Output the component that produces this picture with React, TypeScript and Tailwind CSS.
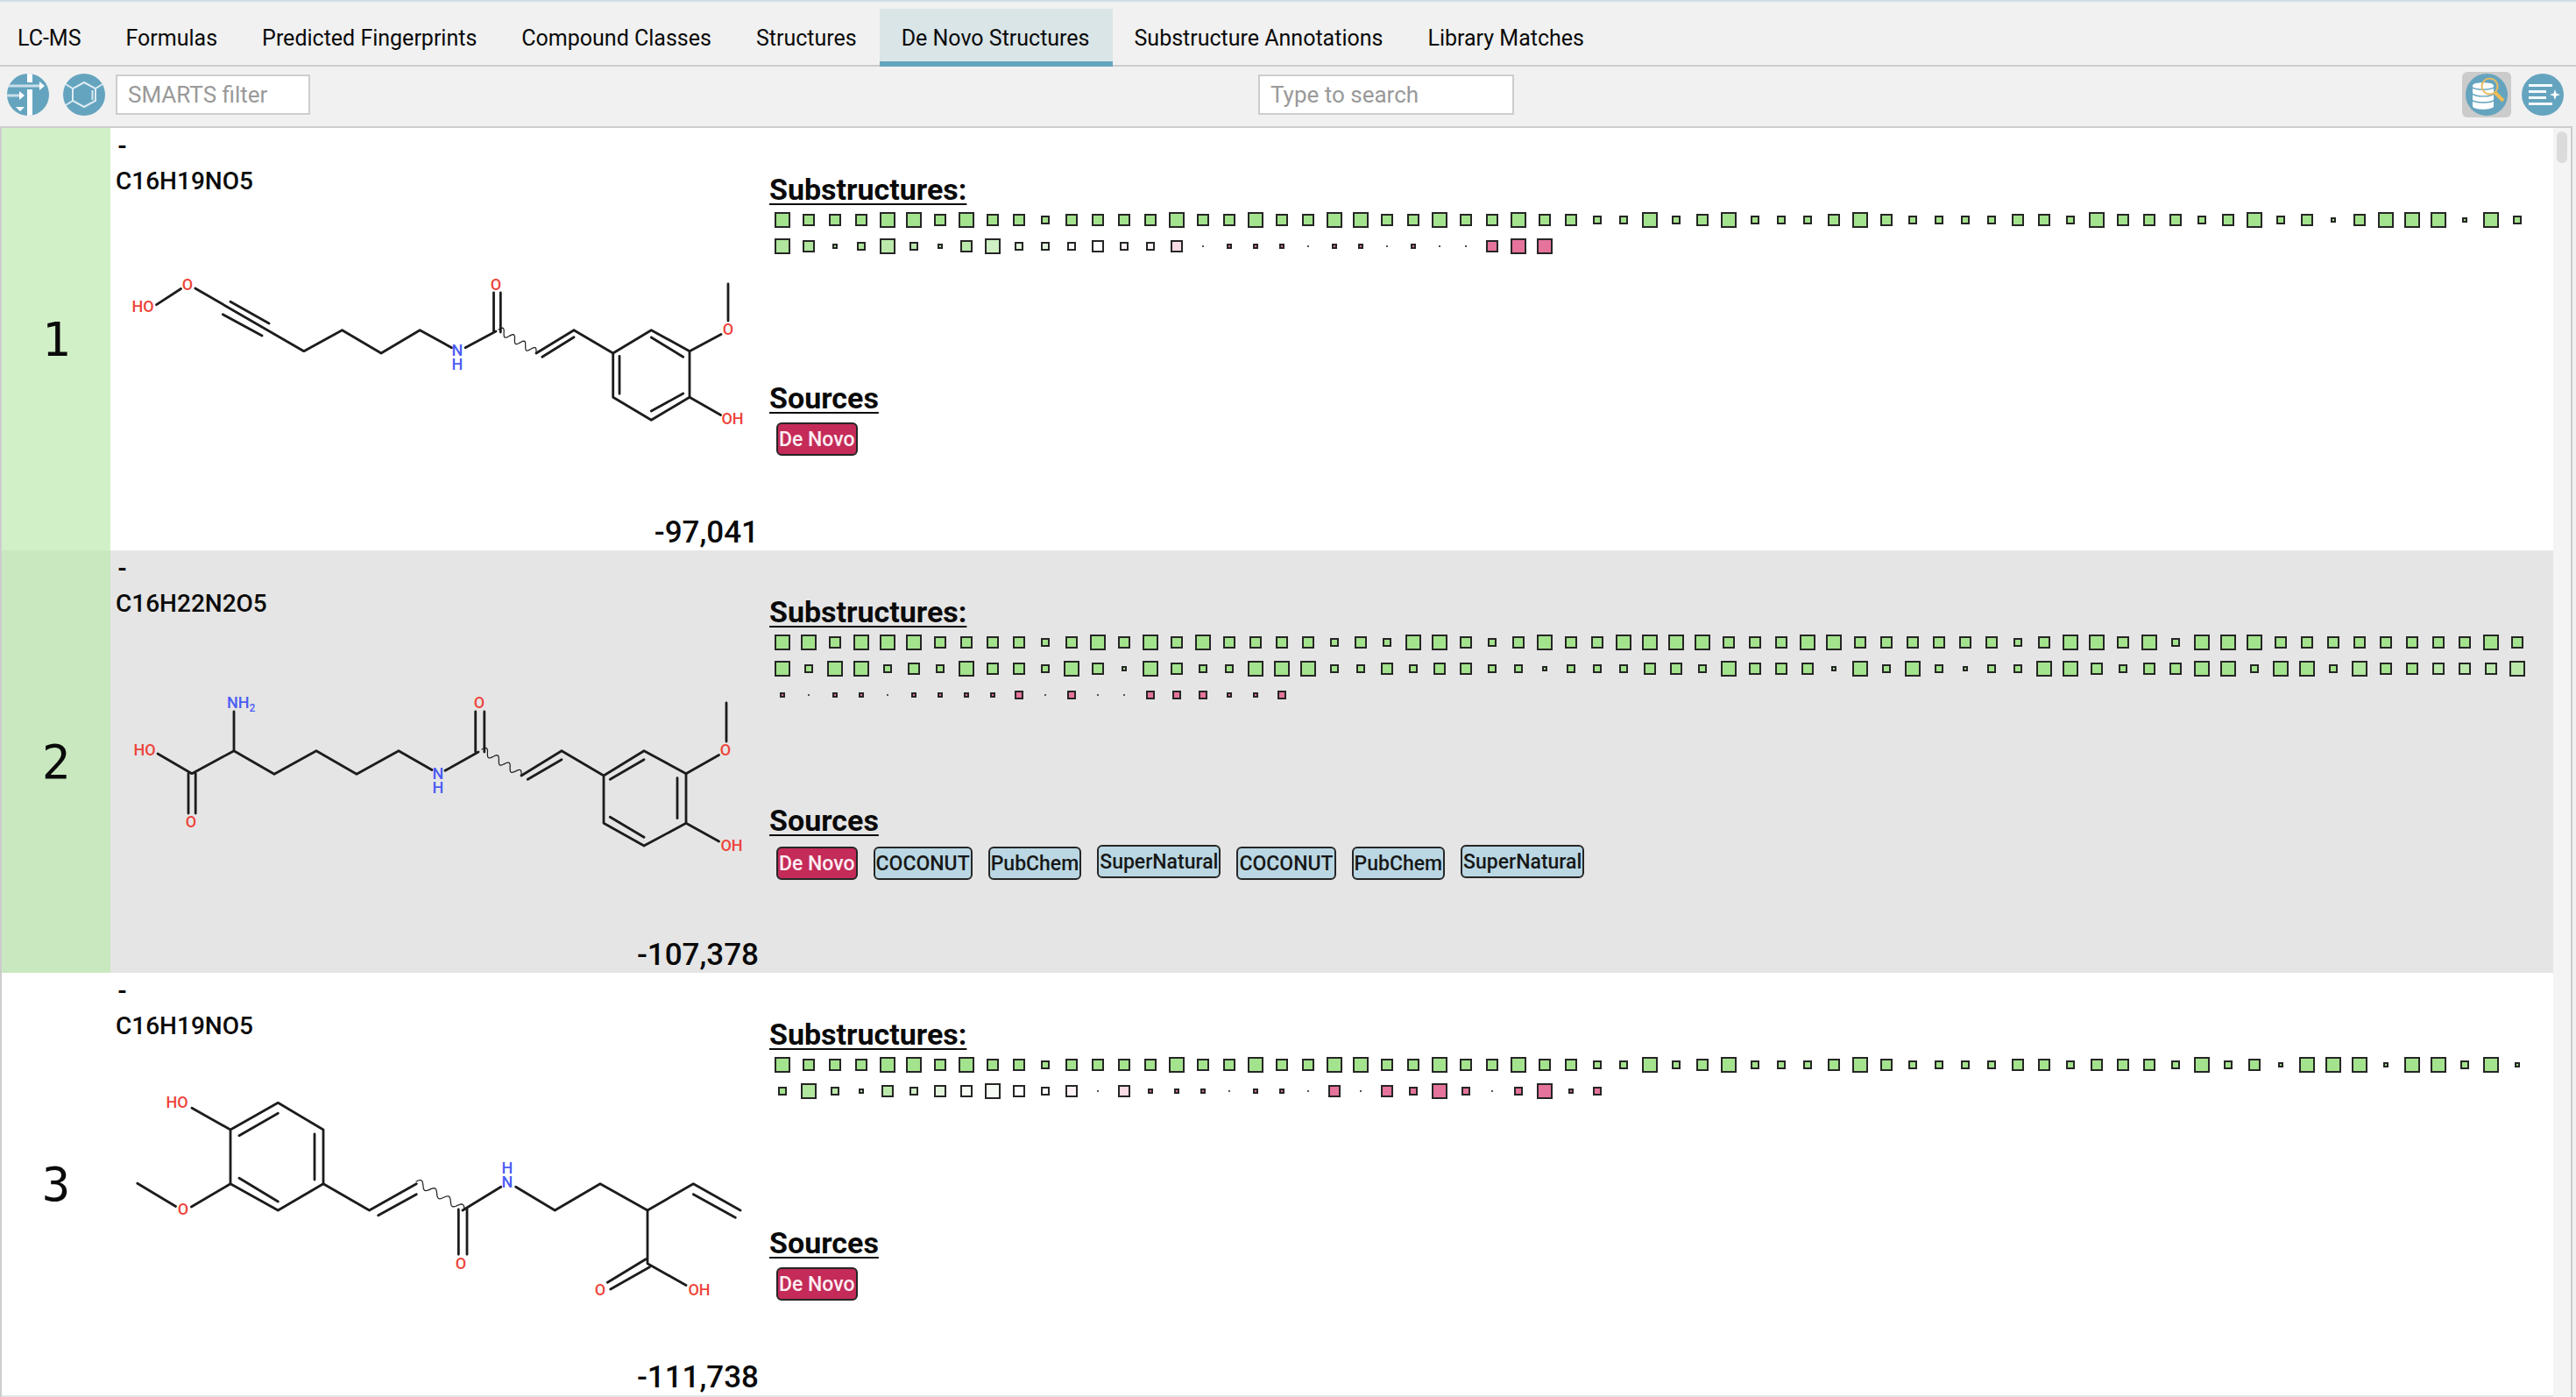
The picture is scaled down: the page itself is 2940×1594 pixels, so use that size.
import { useState } from "react";
import type { ReactNode } from "react";

const TABS = [
  "LC-MS",
  "Formulas",
  "Predicted Fingerprints",
  "Compound Classes",
  "Structures",
  "De Novo Structures",
  "Substructure Annotations",
  "Library Matches",
];

/* Marker sizes, from a two pixel dot up to the largest square. */
const SIZE: Record<string, string> = {
  "0": "size-0.5 bg-neutral-600",
  "1": "size-1.5 border-2 border-neutral-800",
  "2": "size-2.5 border-2 border-neutral-800",
  "3": "size-3.5 border-2 border-neutral-800",
  "4": "size-[18px] border-2 border-neutral-800",
};

/* Marker fills, from strongly positive (A) to strongly negative (J). */
const FILL: Record<string, string> = {
  A: "bg-[#a4e38d]",
  B: "bg-[#b0e69d]",
  C: "bg-[#bbe9ab]",
  D: "bg-[#cff0c4]",
  E: "bg-[#e2f5db]",
  F: "bg-[#f6fcf4]",
  G: "bg-white",
  H: "bg-[#fff1f5]",
  I: "bg-[#f8dbe4]",
  J: "bg-[#e6739c]",
};

type Candidate = {
  rank: number;
  formula: string;
  score: string;
  explained: boolean;
  sizes: string;
  fills: string;
  sources: string[];
  molecule: ReactNode;
};

function wave(x1: number, y1: number, x2: number, y2: number) {
  const steps = 56;
  const dx = x2 - x1;
  const dy = y2 - y1;
  const len = Math.hypot(dx, dy);
  let d = "";
  for (let i = 0; i <= steps; i++) {
    const t = i / steps;
    const a = -4 * Math.sin(t * Math.PI * 7);
    const x = x1 + dx * t - (dy / len) * a;
    const y = y1 + dy * t + (dx / len) * a;
    d += `${i ? "L" : "M"}${x.toFixed(1)} ${y.toFixed(1)}`;
  }
  return d;
}

/* An atom label centred on x, y; a second label may be stacked below it. */
function Atom({
  x,
  y,
  blue,
  below,
  children,
}: {
  x: number;
  y: number;
  blue?: boolean;
  below?: string;
  children: ReactNode;
}) {
  return (
    <text
      x={x}
      y={y + 6}
      textAnchor="middle"
      stroke="none"
      fill={blue ? "#4a5cf5" : "#ee4339"}
      className="text-[18px] font-medium"
    >
      {children}
      {below && (
        <tspan x={x} dy="16">
          {below}
        </tspan>
      )}
    </text>
  );
}

function Drawing({ label, top, children }: { label: string; top: number; children: ReactNode }) {
  return (
    <svg
      role="img"
      aria-label={label}
      width="734"
      height="360"
      viewBox="0 0 734 360"
      fill="none"
      stroke="#1c1c1c"
      strokeWidth="2.8"
      strokeLinecap="round"
      strokeLinejoin="round"
      className="shrink-0"
    >
      <g transform={`translate(0 ${top})`}>{children}</g>
    </svg>
  );
}

const mol1 = (
  <Drawing label="Structure of candidate 1" top={54}>
    <path d="M46.6 67.7L74.5 49.500M90.8 49L214.8 120.7L258.5 96.7L303 123L347.2 96.7L383.5 116.7M131 64.3L175 89M122.3 78.7L167 103" />
    <path d="M399 116.7L434 98M431.5 54V98M439.3 54V99" />
    <path d={wave(437, 96, 480, 122)} strokeWidth="1.2" />
    <path d="M480 123L523 96.7M486.8 127.3L523 104.7M523 96.7L567.7 123L611.3 96.7L655 120.7V173.3L611.3 199.3L567.7 173.3V123" />
    <path d="M575 126.3V169.3M611.3 105L647.7 127.3M647.7 169L611.3 189M655 120.7L691 101.500M699 86V44M655 173.3L690.500 193.500" />
    <Atom x={31} y={70}>HO</Atom>
    <Atom x={82} y={45}>O</Atom>
    <Atom x={390} y={120} below="H" blue>N</Atom>
    <Atom x={434} y={45}>O</Atom>
    <Atom x={699} y={96}>O</Atom>
    <Atom x={704} y={198}>OH</Atom>
  </Drawing>
);

const mol2 = (
  <Drawing label="Structure of candidate 2" top={62}>
    <path d="M48 90L87 112.7L135 86.7V42M135 86.7L181 113.3L229 86.7L275 113.3L323 86.7L361 108.500M83 112.7V158M91.2 112.7V158" />
    <path d="M376 109.3L414 88M410.7 42V88M420.8 42V88" />
    <path d={wave(418, 85, 463, 114)} strokeWidth="1.2" />
    <path d="M463 115L509 86.7M470.3 119.3L509 96.7M509 86.7L557 115L603 86.7L651 112.7V169.3L603 195L557 169.3V115" />
    <path d="M564.3 119.3L603 96.7M641 117.7V163.7M564.3 162.3L603 185.3M651 112.7L688.500 91.500M697 32V76M651 169.3L688.500 190" />
    <text x="127" y="38" stroke="none" fill="#4a5cf5" className="text-[18px] font-medium">
      NH<tspan dy="4" className="text-[12px]">2</tspan>
    </text>
    <Atom x={33} y={86}>HO</Atom>
    <Atom x={86} y={168}>O</Atom>
    <Atom x={368} y={113} below="H" blue>N</Atom>
    <Atom x={415} y={32}>O</Atom>
    <Atom x={696} y={86}>O</Atom>
    <Atom x={703} y={195}>OH</Atom>
  </Drawing>
);

const mol3 = (
  <Drawing label="Structure of candidate 3" top={30}>
    <path d="M87 44.3L131 69L185.3 38.3L237 69V130.7L185.3 161L131 130.7V69M141 75.7L185.3 50.3M227 74V126M141 124.3L185.3 151" />
    <path d="M131 130.7L86.4 157M24.8 130.3L68.500 156.500M237 130.7L289.5 161L343.3 130.7M299.7 166.7L343.3 142.7" />
    <path d={wave(343, 128, 398, 160)} strokeWidth="1.2" />
    <path d="M391.3 160V211.3M401 159V211.3M396 161L439.7 134.3M456.7 134.3L501.3 161L553 130.7L607 161L659.3 130.7L713 161M659.3 142.7L707.3 169.3" />
    <path d="M607 161V221.7L651 246.500M605 216.7L561.4 243.3M609.4 225.7L564.8 251" />
    <Atom x={70} y={38}>HO</Atom>
    <Atom x={77} y={160}>O</Atom>
    <Atom x={394} y={222}>O</Atom>
    <Atom x={447} y={113} below="N" blue>H</Atom>
    <Atom x={553} y={252}>O</Atom>
    <Atom x={666} y={252}>OH</Atom>
  </Drawing>
);

const CANDIDATES: Candidate[] = [
  {
    rank: 1,
    formula: "C16H19NO5",
    score: "-97,041",
    explained: true,
    sizes:
      "433344343323333433433443343343322" +
      "4234222343222233243332342313444142" +
      "431242134222322301110110100344",
    fills: "A".repeat(67) + "BBBBCCCCDEEFGHHIJJJJJJJJJJJJJJ",
    sources: ["De Novo"],
    molecule: mol1,
  },
  {
    rank: 2,
    formula: "C16H22N2O5",
    score: "-107,378",
    explained: true,
    sizes:
      "443444333323434343333232443234334" +
      "4443334433333323443424443333333343" +
      "424423243324314322444223233221222" +
      "3324333142421224432334424424333334" +
      "10110111120200222112",
    fills: "A".repeat(67) + "A".repeat(60) + "BAACCCC" + "J".repeat(20),
    sources: ["De Novo", "COCONUT", "PubChem", "SuperNatural", "COCONUT", "PubChem", "SuperNatural"],
    molecule: mol2,
  },
  {
    rank: 3,
    formula: "C16H19NO5",
    score: "-111,738",
    explained: false,
    sizes:
      "433344343323333433433443343343322" +
      "4234222343222233233324231444144241" +
      "24213233432303111011030324202412",
    fills: "A".repeat(67) + "ABCCCDEFFGGHJIJJJJJJJJJJJJJJJJJJ",
    sources: ["De Novo"],
    molecule: mol3,
  },
];

function FilterIcon() {
  return (
    <svg viewBox="0 0 48 48" className="size-12" aria-hidden="true">
      <clipPath id="filter-disc">
        <circle cx="24" cy="24" r="24" />
      </clipPath>
      <g clipPath="url(#filter-disc)">
        <rect width="48" height="48" fill="#65a4bf" />
        <path d="M23 0h6v10h-6zM23 18h6v30h-6z" fill="#fff" />
        <path d="M0 14h38M0 25h15" stroke="#c9dfe9" strokeWidth="3" />
        <path d="M37 9l6 5l-6 5zM14 20l6 5l-6 5zM10 38h10l-5 5z" fill="#fff" />
      </g>
    </svg>
  );
}

function RingIcon() {
  return (
    <svg viewBox="0 0 48 48" className="size-12" aria-hidden="true">
      <circle cx="24" cy="24" r="24" fill="#65a4bf" />
      <path
        d="M24 10L37 17V31L24 38L11 31V17ZM37 17L45 12M11 17L3 12M11 31L3 36M33.500 19V30"
        fill="none"
        stroke="#dcecf3"
        strokeWidth="2"
      />
    </svg>
  );
}

function DatabaseIcon() {
  return (
    <svg viewBox="0 0 48 48" className="size-12" aria-hidden="true">
      <circle cx="24" cy="24" r="24" fill="#65a4bf" />
      <path d="M8 13.500C8 9 32 9 32 13.500V37C32 42 8 42 8 37Z" fill="#fff" />
      <path
        d="M7 15.500C11 19 29 19 33 15.500M7 22.500C11 27 29 27 33 22.500M7 30C11 34 29 34 33 30"
        fill="none"
        stroke="#65a4bf"
        strokeWidth="1.400"
      />
      <circle cx="27.500" cy="14.500" r="9" fill="none" stroke="#e9bb62" strokeWidth="2" />
      <path d="M33.500 21.500L43 31" stroke="#f0bb55" strokeWidth="4" />
    </svg>
  );
}

function LinesIcon() {
  return (
    <svg viewBox="0 0 48 48" className="size-12" aria-hidden="true">
      <circle cx="24" cy="24" r="24" fill="#65a4bf" />
      <path d="M8 13.500H35M8 20.500H28M8 27.500H28M8 34.500H35" stroke="#f4f9fb" strokeWidth="3" />
      <path d="M38 18L39.500 22.500L44 24L39.500 25.500L38 30L36.500 25.500L32 24L36.500 22.500Z" fill="#fff" />
    </svg>
  );
}

function Source({ name }: { name: string }) {
  const tone = name === "De Novo" ? "bg-[#c42b58] text-[#fdeef3]" : "bg-[#bad7e3] text-neutral-900";
  const raised = name === "SuperNatural" ? "mb-0.5" : "";
  return (
    <li
      className={`flex h-[38px] items-center rounded-md border-2 border-neutral-800 px-px pt-0.5 text-[23px] leading-6 font-medium ${tone} ${raised}`}
    >
      {name}
    </li>
  );
}

function Heading({ children }: { children: ReactNode }) {
  return (
    <h2 className="text-[34px] leading-10 font-bold underline decoration-2 underline-offset-4 [text-decoration-skip-ink:none]">
      {children}
    </h2>
  );
}

function CandidateRow({ item }: { item: Candidate }) {
  const shaded = item.rank % 2 === 0;
  const rankTone = !item.explained ? "" : shaded ? "bg-[#c9e8bf]" : "bg-[#d2f0c8]";
  return (
    <li className={`flex h-[482px] shrink-0 ${shaded ? "bg-[#e5e5e5]" : "bg-white"}`}>
      <div
        className={`flex w-[124px] shrink-0 items-center justify-center font-['DejaVu_Sans_Mono',monospace] text-[54px] ${rankTone}`}
      >
        {item.rank}
      </div>
      <div className="flex w-[752px] shrink-0 flex-col pt-0.5 pl-1.5 font-medium">
        <div className="pl-0.5 text-[28px] leading-[38px] font-bold">-</div>
        <div className="mt-0.5 text-[28px] leading-[38px]">{item.formula}</div>
        {item.molecule}
        <div className="pr-3 text-right text-[35px] leading-[44px]">{item.score}</div>
      </div>
      <div className="flex min-w-0 flex-1 flex-col pt-[50px]">
        <Heading>Substructures:</Heading>
        <div className="flex h-[198px] flex-wrap content-start">
          {item.sizes.split("").map((s, i) => (
            <span key={i} className="flex size-[30px] items-center justify-center">
              <span className={`${s === "0" ? "" : FILL[item.fills[i]]} ${SIZE[s]}`} />
            </span>
          ))}
        </div>
        <Heading>Sources</Heading>
        <ul className="flex items-end gap-[18px] pt-2 pl-2">
          {item.sources.map((name, i) => (
            <Source key={i} name={name} />
          ))}
        </ul>
      </div>
    </li>
  );
}

export default function App() {
  const [active, setActive] = useState("De Novo Structures");
  const [smarts, setSmarts] = useState("");
  const [query, setQuery] = useState("");
  const field =
    "h-[46px] border-2 border-[#cdcdcd] bg-white px-3 text-[26px] text-neutral-900 outline-none placeholder:text-[#999]";

  return (
    <div className="flex h-screen flex-col overflow-hidden bg-[#f1f1f1] font-[Roboto,sans-serif] text-neutral-950">
      <div role="tablist" className="flex h-[76px] shrink-0 border-t-2 border-t-[#cfdfe6] border-b-2 border-b-[#cdcdcd] pt-2">
        {TABS.map((tab, i) => (
          <button
            key={tab}
            type="button"
            role="tab"
            aria-selected={tab === active}
            onClick={() => setActive(tab)}
            className={`-mb-0.5 border-b-6 pt-2 pr-[26px] text-[25px] whitespace-nowrap ${i === 0 ? "pl-5" : "pl-[25px]"} ${
              tab === active ? "border-[#65a4bf] bg-[#dae5e7]" : "border-transparent"
            }`}
          >
            {tab}
          </button>
        ))}
      </div>

      <div className="flex h-[68px] shrink-0 items-center justify-between pr-3.5 pb-1 pl-2">
        <div className="flex items-center gap-4">
          <button type="button" aria-label="Filter">
            <FilterIcon />
          </button>
          <div className="flex items-center gap-3">
            <button type="button" aria-label="Substructure filter">
              <RingIcon />
            </button>
            <input
              aria-label="SMARTS filter"
              placeholder="SMARTS filter"
              value={smarts}
              onChange={(e) => setSmarts(e.target.value)}
              className={`w-[222px] ${field}`}
            />
          </div>
        </div>
        <input
          aria-label="Search"
          placeholder="Type to search"
          value={query}
          onChange={(e) => setQuery(e.target.value)}
          className={`w-[292px] ${field}`}
        />
        <div className="flex items-center gap-3">
          <button
            type="button"
            aria-label="Show database hits"
            aria-pressed="true"
            className="rounded-md bg-[#cbcbcb] px-1 py-0.5"
          >
            <DatabaseIcon />
          </button>
          <button type="button" aria-label="Add to list">
            <LinesIcon />
          </button>
        </div>
      </div>

      <div className="mr-1 flex min-h-0 flex-1 border-2 border-b-0 border-[#cdcdcd]">
        <ol className="flex min-w-0 flex-1 flex-col overflow-hidden">
          {CANDIDATES.map((item) => (
            <CandidateRow key={item.rank} item={item} />
          ))}
          <li className="min-h-0.5 flex-1 bg-[#e5e5e5]" />
        </ol>
        <div className="w-5 shrink-0 bg-[#f4f4f4] px-1 pt-1">
          <div className="h-9 rounded-full bg-[#dbdbdb]" />
        </div>
      </div>
    </div>
  );
}
